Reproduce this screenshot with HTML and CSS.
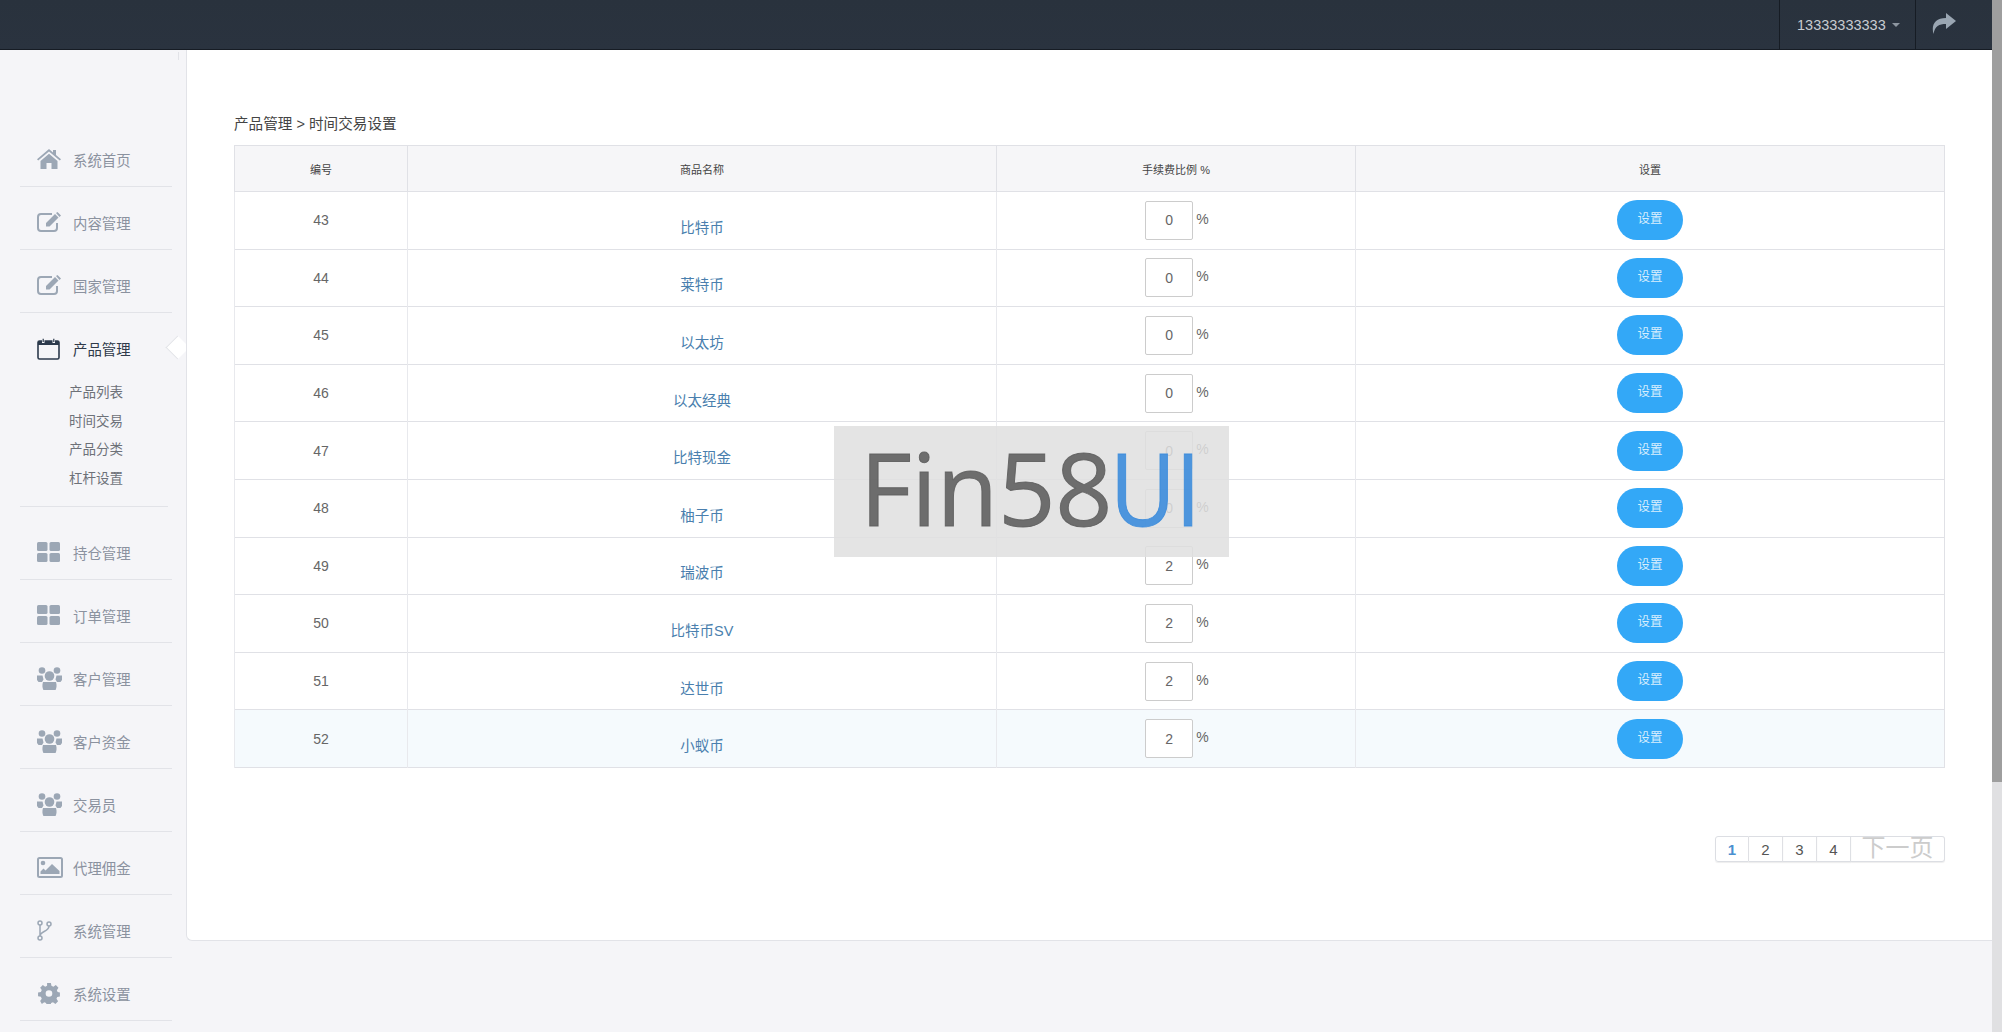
FILE: index.html
```html
<!DOCTYPE html>
<html lang="en">
<head>
    <meta charset="UTF-8">
    <title>时间交易设置</title>
    <link rel="stylesheet" href="styles.css">
</head>
<body>
<div class="page">
    <header class="topbar">
        <div class="user">13333333333<span class="caret"></span></div>
        <div class="logout">
            <svg width="24" height="21" viewBox="0 0 24 21"><path class="ico" d="M14 0l10 8-10 8v-5C7 11 3 13 1.500 21 -1 12 3 5 14 5z"/></svg>
        </div>
    </header>
    <div class="layout">
        <aside class="sidebar">
            <span class="tick"></span>
            <ul class="nav">
                <li class="nav-item">
                    <svg class="nav-icon" width="24" height="20" viewBox="0 0 24 20"><path class="ico" d="M12 0l4 3.400V1h3v5l5 4.200-1.200 1.300L12 2.600 1.200 11.500 0 10.200zM3.500 12L12 4.800 20.500 12v8h-6v-6h-5v6h-6z"/></svg>
                    <span>系统首页</span>
                </li>
                <li class="nav-item">
                    <svg class="nav-icon" width="25" height="20" viewBox="0 0 25 20"><path class="ico-line" d="M20 11v5a3 3 0 0 1-3 3H4a3 3 0 0 1-3-3V5a3 3 0 0 1 3-3h11"/><path class="ico" d="M9 11l9-9 3.500 3.500-9 9H9zM19 1l1.500-1L24 3.500 22.500 5z"/></svg>
                    <span>内容管理</span>
                </li>
                <li class="nav-item">
                    <svg class="nav-icon" width="25" height="20" viewBox="0 0 25 20"><path class="ico-line" d="M20 11v5a3 3 0 0 1-3 3H4a3 3 0 0 1-3-3V5a3 3 0 0 1 3-3h11"/><path class="ico" d="M9 11l9-9 3.500 3.500-9 9H9zM19 1l1.500-1L24 3.500 22.500 5z"/></svg>
                    <span>国家管理</span>
                </li>
                <li class="nav-item active">
                    <svg class="nav-icon" width="23" height="22" viewBox="0 0 23 22"><rect x="1" y="3" width="21" height="18" rx="1.500" fill="none" stroke="#2c3a4c" stroke-width="1.600"/><path fill="#2c3a4c" d="M1 3h21v4H1z"/><path fill="#f5f6f9" d="M5 2h2.500v3H5zM15.500 2H18v3h-2.500z"/><path fill="none" stroke="#2c3a4c" stroke-width="1.200" d="M6.200 4V.8M16.800 4V.8"/></svg>
                    <span>产品管理</span>
                    <span class="pointer"></span>
                </li>
                <li class="subnav">
                    <a>产品列表</a>
                    <a>时间交易</a>
                    <a>产品分类</a>
                    <a>杠杆设置</a>
                </li>
                <li class="nav-item">
                    <svg class="nav-icon" width="23" height="20" viewBox="0 0 23 20"><rect class="ico" width="10.500" height="9" rx="1.500"/><rect class="ico" x="12.500" width="10.500" height="9" rx="1.500"/><rect class="ico" y="11" width="10.500" height="9" rx="1.500"/><rect class="ico" x="12.500" y="11" width="10.500" height="9" rx="1.500"/></svg>
                    <span>持仓管理</span>
                </li>
                <li class="nav-item">
                    <svg class="nav-icon" width="23" height="20" viewBox="0 0 23 20"><rect class="ico" width="10.500" height="9" rx="1.500"/><rect class="ico" x="12.500" width="10.500" height="9" rx="1.500"/><rect class="ico" y="11" width="10.500" height="9" rx="1.500"/><rect class="ico" x="12.500" y="11" width="10.500" height="9" rx="1.500"/></svg>
                    <span>订单管理</span>
                </li>
                <li class="nav-item">
                    <svg class="nav-icon" width="25" height="23" viewBox="0 0 25 23"><circle class="ico" cx="5" cy="3.500" r="3.300"/><circle class="ico" cx="20" cy="3.500" r="3.300"/><circle class="ico" cx="12.500" cy="9" r="4.800"/><path class="ico" d="M0 8.500h5.500l1 4L5 15H1.500L0 13zM25 8.500h-5.500l-1 4L20 15h3.500L25 13zM6 15h13c1 3 .6 6-.4 8H6.400C5.400 21 5 18 6 15z"/></svg>
                    <span>客户管理</span>
                </li>
                <li class="nav-item">
                    <svg class="nav-icon" width="25" height="23" viewBox="0 0 25 23"><circle class="ico" cx="5" cy="3.500" r="3.300"/><circle class="ico" cx="20" cy="3.500" r="3.300"/><circle class="ico" cx="12.500" cy="9" r="4.800"/><path class="ico" d="M0 8.500h5.500l1 4L5 15H1.500L0 13zM25 8.500h-5.500l-1 4L20 15h3.500L25 13zM6 15h13c1 3 .6 6-.4 8H6.400C5.400 21 5 18 6 15z"/></svg>
                    <span>客户资金</span>
                </li>
                <li class="nav-item">
                    <svg class="nav-icon" width="25" height="23" viewBox="0 0 25 23"><circle class="ico" cx="5" cy="3.500" r="3.300"/><circle class="ico" cx="20" cy="3.500" r="3.300"/><circle class="ico" cx="12.500" cy="9" r="4.800"/><path class="ico" d="M0 8.500h5.500l1 4L5 15H1.500L0 13zM25 8.500h-5.500l-1 4L20 15h3.500L25 13zM6 15h13c1 3 .6 6-.4 8H6.400C5.400 21 5 18 6 15z"/></svg>
                    <span>交易员</span>
                </li>
                <li class="nav-item">
                    <svg class="nav-icon" width="26" height="21" viewBox="0 0 26 21"><rect class="ico-line" x="1" y="1" width="24" height="19" rx="1.500"/><circle class="ico" cx="6" cy="6" r="2.300"/><path class="ico" d="M3.500 17v-2.500l3-3 2 2L15 7l7.500 7v3z"/></svg>
                    <span>代理佣金</span>
                </li>
                <li class="nav-item">
                    <svg class="nav-icon" width="25" height="21" viewBox="0 0 25 21"><g class="ico-line thin"><circle cx="3" cy="3" r="2"/><circle cx="3" cy="18" r="2"/><circle cx="12" cy="4" r="2"/><path d="M3 5v11M12 6c0 6-9 5-9 10"/></g></svg>
                    <span>系统管理</span>
                </li>
                <li class="nav-item">
                    <svg class="nav-icon" width="25" height="21" viewBox="0 0 21 21"><path class="ico" fill-rule="evenodd" d="M8.500 0h4l.6 3 2 .9 2.600-1.700 2.800 2.800L18.800 7.600l.8 2 2.400.5v4l-2.800.6-.8 2 1.700 2.500-2.800 2.800-2.600-1.700-2 .8-.6 2.900h-4l-.6-2.900-2-.8-2.500 1.700L1.200 19l1.700-2.500-.9-2-3-.6v-4l3-.5.9-2L1.200 5l2.800-2.800 2.500 1.700 2-.9zM10.500 7.500a3.500 3.500 0 1 0 0 7 3.500 3.500 0 0 0 0-7z" transform="scale(.95)"/></svg>
                    <span>系统设置</span>
                </li>
            </ul>
        </aside>
        <main class="content">
            <div class="crumb">产品管理 &gt; 时间交易设置</div>
            <table class="grid">
                <colgroup>
                    <col class="col-id"><col class="col-name"><col class="col-fee"><col class="col-act">
                </colgroup>
                <thead>
                    <tr><th>编号</th><th>商品名称</th><th>手续费比例 %</th><th>设置</th></tr>
                </thead>
                <tbody>
                    <tr><td>43</td><td class="name"><a>比特币</a></td><td><span class="fee"><span class="fee-box">0</span>%</span></td><td><a class="btn">设置</a></td></tr>
                    <tr><td>44</td><td class="name"><a>莱特币</a></td><td><span class="fee"><span class="fee-box">0</span>%</span></td><td><a class="btn">设置</a></td></tr>
                    <tr><td>45</td><td class="name"><a>以太坊</a></td><td><span class="fee"><span class="fee-box">0</span>%</span></td><td><a class="btn">设置</a></td></tr>
                    <tr><td>46</td><td class="name"><a>以太经典</a></td><td><span class="fee"><span class="fee-box">0</span>%</span></td><td><a class="btn">设置</a></td></tr>
                    <tr><td>47</td><td class="name"><a>比特现金</a></td><td><span class="fee"><span class="fee-box">0</span>%</span></td><td><a class="btn">设置</a></td></tr>
                    <tr><td>48</td><td class="name"><a>柚子币</a></td><td><span class="fee"><span class="fee-box">0</span>%</span></td><td><a class="btn">设置</a></td></tr>
                    <tr><td>49</td><td class="name"><a>瑞波币</a></td><td><span class="fee"><span class="fee-box">2</span>%</span></td><td><a class="btn">设置</a></td></tr>
                    <tr><td>50</td><td class="name"><a>比特币SV</a></td><td><span class="fee"><span class="fee-box">2</span>%</span></td><td><a class="btn">设置</a></td></tr>
                    <tr><td>51</td><td class="name"><a>达世币</a></td><td><span class="fee"><span class="fee-box">2</span>%</span></td><td><a class="btn">设置</a></td></tr>
                    <tr class="hover"><td>52</td><td class="name"><a>小蚁币</a></td><td><span class="fee"><span class="fee-box">2</span>%</span></td><td><a class="btn">设置</a></td></tr>
                </tbody>
            </table>
            <div class="pager">
                <a class="current">1</a><a>2</a><a>3</a><a>4</a><a class="next">下一页</a>
            </div>
        </main>
    </div>
</div>
<div class="scrollbar"><div class="thumb"></div></div>
<div class="watermark">Fin58<span class="wm-blue">UI</span></div>
</body>
</html>
```

FILE: styles.css
```css
* {
    box-sizing: border-box;
}
html, body {
    height: 100%;
}
body {
    margin: 0;
    display: flex;
    height: 1032px;
    overflow: hidden;
    background: #f5f5f8;
    font-family: "Liberation Sans", "Noto Sans CJK SC", sans-serif;
    font-size: 14px;
    color: #666;
}
.page {
    flex: 1;
    min-width: 0;
}
.scrollbar {
    width: 10px;
    background: #e0e0e2;
}
.thumb {
    height: 782px;
    background: #9e9e9e;
}

/* top bar */
.topbar {
    display: flex;
    justify-content: flex-end;
    height: 50px;
    background: linear-gradient(#29323d, #2a333f);
    border-bottom: 1px solid #161c24;
}
.user {
    display: flex;
    align-items: center;
    width: 136px;
    padding-left: 17px;
    border-left: 1px solid #161c24;
    color: #c8ccd1;
    font-size: 14.500px;
}
.caret {
    margin-left: 6px;
    border-top: 4.500px solid #8d96a0;
    border-left: 4px solid transparent;
    border-right: 4px solid transparent;
}
.logout {
    display: flex;
    align-items: center;
    width: 77px;
    padding: 0 0 2px 16px;
    border-left: 1px solid #161c24;
}
.logout .ico {
    fill: #9aa6b2;
}

.layout {
    display: flex;
    height: 982px;
}

/* left menu */
.sidebar {
    position: relative;
    width: 186px;
    flex: none;
    padding: 74px 14px 0 20px;
    background: #f5f5f8;
}
.tick {
    position: absolute;
    left: 178px;
    top: 2px;
    height: 8px;
    border-left: 1px solid #e2e3e8;
}
.nav {
    list-style: none;
    margin: 0;
    padding: 0;
}
.nav-item {
    position: relative;
    display: grid;
    grid-template-columns: 36px 1fr;
    align-items: center;
    height: 63px;
    padding: 8px 0 0 17px;
    border-bottom: 1px solid #e2e3e8;
    color: #8b929f;
    font-size: 14.400px;
}
.ico {
    fill: #9ca7b5;
}
.ico-line {
    fill: none;
    stroke: #9ca7b5;
    stroke-width: 2;
}
.ico-line.thin {
    stroke-width: 1.500;
}
.active {
    border-bottom: 0;
    color: #2f3a4a;
}
.pointer {
    position: absolute;
    right: -14px;
    top: 26px;
    width: 17px;
    height: 17px;
    background: #fff;
    border-left: 1px solid #e2e3e8;
    border-bottom: 1px solid #e2e3e8;
    transform: rotate(45deg);
}
.subnav {
    display: flex;
    flex-direction: column;
    height: 131px;
    margin: 0 4px 10px 0;
    padding: 3px 0 0 49px;
    border-bottom: 1px solid #e2e3e8;
    font-size: 13.500px;
    line-height: 28.500px;
    color: #6d7178;
}

/* main panel */
.content {
    flex: none;
    position: relative;
    width: 1806px;
    height: 891px;
    padding: 64px 47px 0;
    background: #fff;
    border-left: 1px solid #e2e3e8;
    border-bottom: 1px solid #e2e3e8;
    border-bottom-left-radius: 6px;
}
.crumb {
    height: 20px;
    margin-bottom: 11px;
    line-height: 20px;
    font-size: 14.600px;
    color: #444;
}
.grid {
    width: 1711px;
    table-layout: fixed;
    border-collapse: collapse;
    border: 1px solid #e0e1e6;
}
.col-id { width: 173px; }
.col-name { width: 589px; }
.col-fee { width: 359px; }
.grid th {
    height: 46px;
    background: #f6f6f8;
    border: 1px solid #e0e1e6;
    font-size: 11px;
    font-weight: normal;
    color: #444;
}
.grid td {
    height: 57.600px;
    padding: 0;
    text-align: center;
    border-top: 1px solid #e0e1e6;
    border-left: 1px solid #e8e9ed;
    color: #666;
}
.grid td.name {
    padding-top: 12px;
}
.name a {
    font-size: 14.500px;
    color: #4a7fae;
}
.hover td {
    background: #f5fafd;
}
.fee {
    display: inline-flex;
    align-items: flex-start;
    gap: 3px;
    padding-left: 2px;
    vertical-align: middle;
    font-size: 14px;
    line-height: 36px;
}
.fee-box {
    display: flex;
    align-items: center;
    justify-content: center;
    width: 48px;
    height: 39px;
    background: #fff;
    border: 1px solid #ccc;
    border-radius: 2px;
    font-size: 14px;
}
.btn {
    display: inline-block;
    width: 66px;
    height: 40px;
    line-height: 39px;
    vertical-align: middle;
    background: #33a8f7;
    border-radius: 20px;
    color: #d8eefd;
    font-size: 12.500px;
}

/* pager */
.pager {
    display: flex;
    justify-content: flex-end;
    margin-top: 68px;
}
.pager a {
    width: 34px;
    height: 26px;
    line-height: 26px;
    text-align: center;
    border: 1px solid #dcdee3;
    border-left: 0;
    font-size: 15px;
    color: #555;
    box-shadow: 0 1px 1px #eee;
}
.pager a:first-child {
    border-left: 1px solid #dcdee3;
    border-radius: 3px 0 0 3px;
}
.pager .current {
    color: #4a90d0;
    font-weight: bold;
}
.pager .next {
    width: 94px;
    line-height: 22px;
    font-size: 24px;
    color: #ccc;
    border-radius: 0 3px 3px 0;
}

/* overlay stamp */
.watermark {
    position: absolute;
    left: 834px;
    top: 426px;
    width: 395px;
    height: 131px;
    padding-left: 26px;
    line-height: 122px;
    background: rgba(224, 224, 224, 0.86);
    font-family: "Open Sans", sans-serif;
    font-size: 100px;
    color: rgba(95, 95, 95, 0.9);
    -webkit-text-stroke: 1px rgba(95, 95, 95, 0.9);
    white-space: nowrap;
}
.wm-blue {
    display: inline-block;
    margin-left: -3px;
    color: rgba(60, 140, 220, 0.9);
    -webkit-text-stroke: 1px rgba(60, 140, 220, 0.9);
    transform: scaleX(0.9);
    transform-origin: left center;
}
```
